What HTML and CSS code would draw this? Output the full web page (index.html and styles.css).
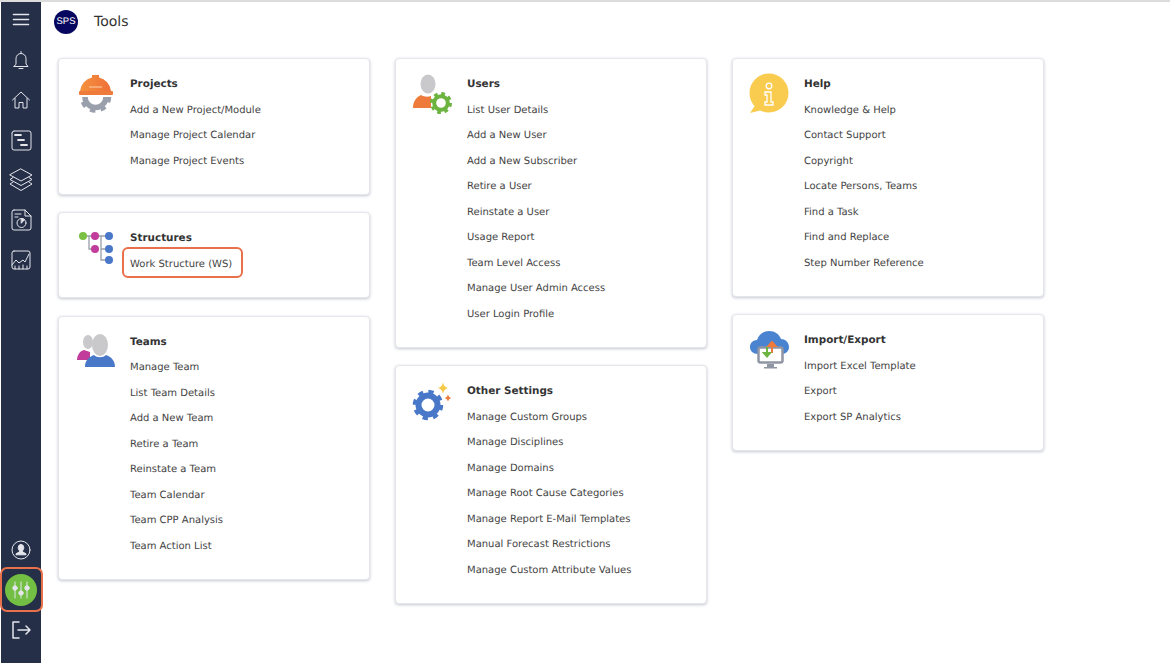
FILE: index.html
```html
<!DOCTYPE HTML>
<html>

<head>
    <meta charset='utf-8'>
    <title>Tools</title>
    <link rel="stylesheet" href="styles.css">
</head>

<body>
    <div class="page">

        <!--side bar-->
        <nav class="sideBar">
            <div class="sideItem menuItem">
                <svg viewBox="0 0 24 24" width="24" height="24"><path d="M4.500 6.500h15M4.500 11.500h15M4.500 16.500h15" stroke-width="1.600" /></svg>
            </div>
            <div class="sideItem">
                <svg viewBox="0 0 24 24" width="24" height="24"><path d="M12 3.500v1.500M7 16v-5.500a5 5 0 0 1 10 0V16l2 2.500H5zM10 20.500h4" /></svg>
            </div>
            <div class="sideItem">
                <svg viewBox="0 0 24 24" width="24" height="24"><path d="M3.500 12 12 4l8.500 8M6 10.500V20h4v-5.500h4V20h4v-9.500" /></svg>
            </div>
            <div class="sideItem">
                <svg viewBox="0 0 24 24" width="24" height="24"><path d="M5 3h15a2 2 0 0 1 2 2v15a2 2 0 0 1-2 2H5a2 2 0 0 1-2-2V5M3 5a2 2 0 0 1 2-2" /><path d="M6 7h6M9 12h6M12 17h6" stroke-width="1.800" /></svg>
            </div>
            <div class="sideItem">
                <svg viewBox="0 0 24 24" width="24" height="24"><path d="M12 1 23 7 12 13 1 7zM4 9.500 1 11.500 12 17.500 23 11.500 20 9.500M4 14 1 16 12 22.500 23 16 20 14" /></svg>
            </div>
            <div class="sideItem">
                <svg viewBox="0 0 24 24" width="24" height="24"><path d="M5 2h11l6 6v12a2 2 0 0 1-2 2H5a2 2 0 0 1-2-2V4a2 2 0 0 1 2-2zM16 2v6h6M6 6h6M6 9h3" /><circle cx="12.500" cy="15" r="4.500" /><path d="M12.500 15l3-3.500-3-1z" class="iconFill" /></svg>
            </div>
            <div class="sideItem">
                <svg viewBox="0 0 24 24" width="24" height="24"><rect x="3" y="3" width="18" height="18" rx="2" /><path d="M3 17l4-5 3 3 4-3 2 2 4-8" /><path d="M6 21v-3M10 21v-3M14 21v-4M18 21v-3" stroke-width="1" /></svg>
            </div>
            <div class="sideBottom">
                <div class="sideItem">
                    <svg viewBox="0 0 24 24" width="24" height="24"><circle cx="12" cy="12" r="9" /><path d="M12 6.500a2.800 3.200 0 0 1 2.800 3.200c0 1.500-.8 2.600-1.300 3.100v1l3.500 2v1H7v-1l3.500-2v-1c-.5-.5-1.300-1.600-1.300-3.100A2.800 3.200 0 0 1 12 6.500z" class="iconFill" /></svg>
                </div>
                <div class="sideItem toolsItem">
                    <div class="toolsBadge">
                        <svg viewBox="0 0 24 24" width="24" height="24"><path d="M6 4v16M12 4v16M18 4v16" stroke-width="1" /><circle cx="6" cy="10" r="2.200" class="iconFill" /><circle cx="12" cy="15" r="2.200" class="iconFill" /><circle cx="18" cy="10" r="2.200" class="iconFill" /></svg>
                    </div>
                </div>
                <div class="sideItem">
                    <svg viewBox="0 0 24 24" width="24" height="24"><path d="M10 4H4v16h6M9 12h12M17 8l4 4-4 4" stroke-width="1.500" /></svg>
                </div>
            </div>
        </nav>

        <main class="mainArea">
            <header class="topBar">
                <div class="logo">SPS</div>
                <div class="pageTitle">Tools</div>
            </header>

            <div class="columns">

                <!--first column-->
                <div class="column">
                    <section class="card">
                        <svg class="cardIcon" viewBox="0 0 44 44" width="44" height="44">
                            <defs>
                                <linearGradient id="hatColor" x1="0" y1="0" x2="1" y2="0">
                                    <stop offset="0" stop-color="#f5923c" />
                                    <stop offset="1" stop-color="#ee6f3a" />
                                </linearGradient>
                                <clipPath id="halfGear"><rect x="0" y="25" width="44" height="19" /></clipPath>
                            </defs>
                            <path d="M5 19a15.500 15.500 0 0 1 12-13.500V3h7v2.500A15.500 15.500 0 0 1 36 19z" fill="url(#hatColor)" />
                            <rect x="4" y="19" width="34" height="4" rx="1" fill="#ee7b3c" />
                            <path d="M14 15h13" stroke="#f9c79b" stroke-width="1.200" />
                            <g clip-path="url(#halfGear)" fill="none" stroke="#9a9fac">
                                <circle cx="20.500" cy="25" r="10.500" stroke-width="5.500" />
                                <circle cx="20.500" cy="25" r="14" stroke-width="3.500" stroke-dasharray="5.500 5.500" />
                            </g>
                        </svg>
                        <div class="cardBody">
                            <h2>Projects</h2>
                            <a>Add a New Project/Module</a>
                            <a>Manage Project Calendar</a>
                            <a>Manage Project Events</a>
                        </div>
                    </section>

                    <section class="card">
                        <svg class="cardIcon" viewBox="0 0 44 44" width="44" height="44">
                            <path d="M8 10h26M14 10v13h6M26 10v24h8M26 23h8" fill="none" stroke="#9a9ea8" stroke-width="1.300" />
                            <circle cx="8" cy="10" r="4" fill="#7ac143" />
                            <circle cx="20" cy="10" r="4" fill="#c23d9b" />
                            <circle cx="20" cy="23" r="4" fill="#c23d9b" />
                            <circle cx="34" cy="10" r="4" fill="#4a78c9" />
                            <circle cx="34" cy="23" r="4" fill="#4a78c9" />
                            <circle cx="34" cy="34" r="4" fill="#4a78c9" />
                        </svg>
                        <div class="cardBody">
                            <h2>Structures</h2>
                            <a><span class="marked">Work Structure (WS)</span></a>
                        </div>
                    </section>

                    <section class="card">
                        <svg class="cardIcon" viewBox="0 0 44 44" width="44" height="44">
                            <ellipse cx="13" cy="12" rx="5" ry="7" fill="#c9c9cb" />
                            <ellipse cx="25" cy="15" rx="8" ry="11" fill="#c9c9cb" />
                            <path d="M2 30c0-5 3-9 7-10l6 2v8z" fill="#c23d9b" />
                            <path d="M10 37c0-7 4-10 9-12 3 3 9 3 12 0 5 2 9 5 9 12z" fill="#4a78c9" />
                        </svg>
                        <div class="cardBody">
                            <h2>Teams</h2>
                            <a>Manage Team</a>
                            <a>List Team Details</a>
                            <a>Add a New Team</a>
                            <a>Retire a Team</a>
                            <a>Reinstate a Team</a>
                            <a>Team Calendar</a>
                            <a>Team CPP Analysis</a>
                            <a>Team Action List</a>
                        </div>
                    </section>
                </div>

                <!--second column-->
                <div class="column">
                    <section class="card">
                        <svg class="cardIcon" viewBox="0 0 44 44" width="44" height="44">
                            <ellipse cx="16" cy="12" rx="7.500" ry="9.500" fill="#c9c9cb" />
                            <path d="M1 36c0-6 3-11 8-13 3 2 7 2 10 1v12z" fill="#ee7b3c" />
                            <g fill="none" stroke="#6cb33f">
                                <circle cx="29" cy="31" r="6.800" stroke-width="4" />
                                <circle cx="29" cy="31" r="9.500" stroke-width="3" stroke-dasharray="3.700 3.760" />
                            </g>
                        </svg>
                        <div class="cardBody">
                            <h2>Users</h2>
                            <a>List User Details</a>
                            <a>Add a New User</a>
                            <a>Add a New Subscriber</a>
                            <a>Retire a User</a>
                            <a>Reinstate a User</a>
                            <a>Usage Report</a>
                            <a>Team Level Access</a>
                            <a>Manage User Admin Access</a>
                            <a>User Login Profile</a>
                        </div>
                    </section>

                    <section class="card">
                        <svg class="cardIcon" viewBox="0 0 44 44" width="44" height="44">
                            <g fill="none" stroke="#4a78c9">
                                <circle cx="16" cy="26" r="9.500" stroke-width="6" />
                                <circle cx="16" cy="26" r="13.500" stroke-width="3.500" stroke-dasharray="5.300 5.300" />
                            </g>
                            <path d="M31 3.500q1 4.500 5 5.500-4 1-5 5.500-1-4.500-5-5.500 4-1 5-5.500z" fill="#f7c948" />
                            <path d="M36 15.500q.6 2.900 3.300 3.500-2.700.6-3.300 3.500-.6-2.900-3.300-3.500 2.700-.6 3.300-3.500z" fill="#ee7b3c" />
                        </svg>
                        <div class="cardBody">
                            <h2>Other Settings</h2>
                            <a>Manage Custom Groups</a>
                            <a>Manage Disciplines</a>
                            <a>Manage Domains</a>
                            <a>Manage Root Cause Categories</a>
                            <a>Manage Report E-Mail Templates</a>
                            <a>Manual Forecast Restrictions</a>
                            <a>Manage Custom Attribute Values</a>
                        </div>
                    </section>
                </div>

                <!--third column-->
                <div class="column">
                    <section class="card">
                        <svg class="cardIcon" viewBox="0 0 44 44" width="44" height="44">
                            <circle cx="20" cy="21" r="19.500" fill="#f9cb4f" />
                            <path d="M7 32 1 41l12-3z" fill="#f9cb4f" />
                            <g fill="none" stroke="#fff" stroke-width="1.300">
                                <circle cx="20" cy="14" r="2.800" />
                                <path d="M16 20h6v10h2v3h-8v-3h2v-7h-2z" />
                            </g>
                        </svg>
                        <div class="cardBody">
                            <h2>Help</h2>
                            <a>Knowledge &amp; Help</a>
                            <a>Contact Support</a>
                            <a>Copyright</a>
                            <a>Locate Persons, Teams</a>
                            <a>Find a Task</a>
                            <a>Find and Replace</a>
                            <a>Step Number Reference</a>
                        </div>
                    </section>

                    <section class="card">
                        <svg class="cardIcon" viewBox="0 0 44 44" width="44" height="44">
                            <path d="M9 26c-5 0-8-3-8-7 0-4 3-7 7-7 2-6 7-9 12-9 6 0 10 3 12 8 5 0 8 4 8 8 0 4-3 7-7 7z" fill="#4a84d0" />
                            <rect x="9.500" y="19.500" width="24" height="15" rx="2" fill="#fff" stroke="#8f95a3" stroke-width="2.500" />
                            <path d="M18 36h7v3h3v1.500H15V39h3z" fill="#8f95a3" />
                            <path d="M23 25v-9M19.500 18l3.500-4 3.500 4z" fill="#ee7b3c" stroke="#ee7b3c" stroke-width="2" />
                            <path d="M18 19v8M15 25l3 3.500 3-3.500z" fill="#6cb33f" stroke="#6cb33f" stroke-width="2" />
                        </svg>
                        <div class="cardBody">
                            <h2>Import/Export</h2>
                            <a>Import Excel Template</a>
                            <a>Export</a>
                            <a>Export SP Analytics</a>
                        </div>
                    </section>
                </div>

            </div>
        </main>
    </div>
</body>

</html>
```

FILE: styles.css
```css
body {
    margin: 0;
    background-color: white;
    font-family: "DejaVu Sans", Verdana, sans-serif;
    text-rendering: geometricPrecision;
}

.page {
    display: flex;
    height: 663px;
    box-sizing: border-box;
    padding-left: 1px;
    border-top: 2px solid #dcdcdc;
    overflow: hidden;
}

.sideBar {
    width: 40px;
    flex: none;
    display: flex;
    flex-direction: column;
    padding-bottom: 13px;
    box-sizing: border-box;
    background-color: #252f47;
}

.sideItem {
    height: 40px;
    flex: none;
    display: flex;
    align-items: center;
    justify-content: center;
    position: relative;
}

.menuItem {
    height: 36px;
    margin-bottom: 2px;
}

.sideItem svg {
    fill: none;
    stroke: #e4e6ec;
    stroke-width: 1;
    stroke-linejoin: round;
    stroke-linecap: round;
}

.sideItem svg .iconFill {
    fill: #e4e6ec;
}

.sideBottom {
    margin-top: auto;
}

.toolsBadge {
    width: 32px;
    height: 32px;
    border-radius: 50%;
    background-color: #72bf44;
    display: flex;
    align-items: center;
    justify-content: center;
}

.toolsItem::after {
    content: "";
    position: absolute;
    left: -1px;
    right: -2px;
    top: -3px;
    bottom: -2px;
    border: 2px solid #e8704a;
    border-radius: 7px;
}

.mainArea {
    flex: 1 1 auto;
}

.topBar {
    display: flex;
    align-items: center;
    height: 39px;
    padding-left: 13px;
}

.logo {
    width: 24px;
    height: 24px;
    border-radius: 50%;
    background-color: #07075f;
    color: white;
    font-family: "Liberation Sans", Arial, sans-serif;
    font-size: 9.5px;
    line-height: 24px;
    text-align: center;
}

.pageTitle {
    margin-left: 16px;
    font-size: 14px;
    color: #333;
}

.columns {
    display: flex;
    gap: 25px;
    padding-top: 17px;
    padding-left: 17px;
}

.column {
    width: 312px;
    display: flex;
    flex-direction: column;
    gap: 17.4px;
}

.card {
    display: flex;
    padding: 13px 0 20px 16px;
    background-color: white;
    border-radius: 4px;
    border: 1px solid #e4e6eb;
    box-shadow: 0 1px 3px rgba(60, 70, 100, 0.3);
}

.cardIcon {
    flex: none;
    margin-right: 11px;
}

.cardBody h2 {
    margin: 0;
    height: 25.5px;
    line-height: 25.5px;
    font-size: 10.4px;
    font-weight: bold;
    color: #333;
}

.cardBody a {
    display: block;
    height: 25.5px;
    line-height: 25.5px;
    font-size: 10px;
    color: #444;
}

.marked {
    display: inline-block;
    position: relative;
}

.marked::after {
    content: "";
    position: absolute;
    left: -8px;
    right: -11px;
    top: -5px;
    bottom: -1px;
    border: 2px solid #e8704a;
    border-radius: 6px;
}
```
